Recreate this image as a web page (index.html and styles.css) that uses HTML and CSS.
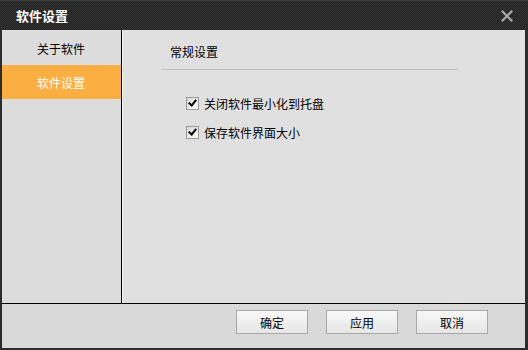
FILE: index.html
```html
<!DOCTYPE html>
<html lang="zh-CN">
<head>
    <meta charset="UTF-8">
    <title>软件设置</title>
    <link rel="stylesheet" href="styles.css">
</head>
<body>
    <div class="ventana">
        <div class="titulo">
            <span class="titulo-texto">软件设置</span>
            <svg class="cerrar" width="12" height="12" viewBox="0 0 12 12">
                <path d="M1.5 1.5 L10.5 10.5 M10.5 1.5 L1.5 10.5" stroke="#a9a9a9" stroke-width="2.2" stroke-linecap="square"/>
            </svg>
        </div>
        <div class="cuerpo">
            <div class="menu">
                <div class="menu-item">关于软件</div>
                <div class="menu-item activo">软件设置</div>
            </div>
            <div class="contenido">
                <div class="seccion">常规设置</div>
                <label class="opcion"><span class="check"></span>关闭软件最小化到托盘</label>
                <label class="opcion"><span class="check"></span>保存软件界面大小</label>
            </div>
        </div>
        <div class="pie">
            <button class="boton">确定</button>
            <button class="boton">应用</button>
            <button class="boton">取消</button>
        </div>
    </div>
</body>
</html>
```

FILE: styles.css
```css
body {
    margin: 0;
    padding: 0;
    font-family: "Noto Sans CJK SC", "DejaVu Sans", sans-serif;
    font-size: 12px;
    color: #000;
}

.ventana {
    width: 528px;
    height: 350px;
    box-sizing: border-box;
    border-left: 2px solid #2c2c2c;
    border-right: 3px solid #2c2c2c;
    border-bottom: 2px solid #2c2c2c;
    display: flex;
    flex-direction: column;
    background: #dedede;
}

.titulo {
    height: 30px;
    flex-shrink: 0;
    margin: 0 -3px 0 -2px;
    padding: 0 15px 0 16px;
    display: flex;
    align-items: center;
    justify-content: space-between;
    background-color: #2b2b2b;
    background-image: conic-gradient(#303030 25%, #262626 0 50%, #303030 0 75%, #262626 0);
    background-size: 2px 2px;
    border-top: 1px solid #3c3c3c;
    box-sizing: border-box;
}

.titulo-texto {
    color: #fff;
    font-weight: bold;
    font-size: 13px;
}

.cuerpo {
    flex: 1;
    display: flex;
}

.menu {
    width: 119px;
    padding-top: 1px;
    background: #dcdcdc;
    border-right: 1px solid #000;
}

.menu-item {
    height: 34px;
    display: flex;
    align-items: center;
    justify-content: center;
    padding-right: 1px;
}

.menu-item.activo {
    background: #fbae42;
    color: #fff;
}

.contenido {
    flex: 1;
    background: #e0e0e0;
    border-left: 1px solid #f4f4f4;
    padding: 9px 0 0 39px;
}

.seccion {
    width: 288px;
    height: 27px;
    padding: 3px 0 0 8px;
    box-sizing: content-box;
    border-bottom: 1px solid #bdbdbd;
    line-height: 20px;
    margin-bottom: 24px;
}

.opcion {
    display: flex;
    align-items: center;
    gap: 5px;
    margin-left: 24px;
    height: 18px;
    margin-bottom: 11px;
}

.check {
    width: 11px;
    height: 11px;
    border: 1px solid #9a9a9a;
    background: linear-gradient(135deg, #d8d8d8, #fdfdfd);
    position: relative;
}

.check::after {
    content: "";
    position: absolute;
    left: 3px;
    top: 0px;
    width: 3px;
    height: 6px;
    border-right: 2px solid #000;
    border-bottom: 2px solid #000;
    transform: rotate(40deg);
}

.pie {
    height: 38px;
    flex-shrink: 0;
    border-top: 1px solid #000;
    background: #d9d9d9;
    display: flex;
    justify-content: flex-end;
    align-items: flex-start;
    gap: 18px;
    padding: 6px 37px 0 0;
    box-sizing: content-box;
}

.boton {
    width: 72px;
    height: 24px;
    font-family: inherit;
    font-size: 12px;
    color: #000;
    border: 1px solid #a8a8a8;
    background: linear-gradient(#f8f8f8, #e6e6e6);
    padding: 0;
}
```
